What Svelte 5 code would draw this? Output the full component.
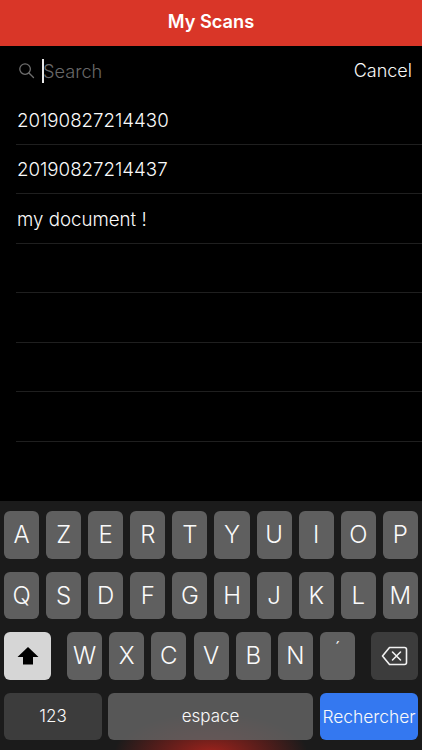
<script>
  const rows = ['20190827214430', '20190827214437', 'my document !', '', '', '', ''];
  const r1 = ['A','Z','E','R','T','Y','U','I','O','P'];
  const r2 = ['Q','S','D','F','G','H','J','K','L','M'];
  const r3 = ['W','X','C','V','B','N','´'];
</script>

<div class="screen">
  <header class="bar">My Scans</header>
  <div class="search">
    <svg class="glass" width="17" height="17" viewBox="0 0 18 18" fill="none" stroke="#6e6e6e" stroke-width="1.4">
      <circle cx="7.5" cy="7.5" r="5.6" />
      <path d="M11.6 11.6 L16.4 16.4" stroke-linecap="round" />
    </svg>
    <span class="caret"></span>
    <span class="placeholder">Search</span>
    <span class="cancel">Cancel</span>
  </div>
  <ul class="list">
    {#each rows as row}
      <li>{row}</li>
    {/each}
  </ul>
  <div class="keyboard">
    <div class="glow"></div>
    <div class="krow">
      {#each r1 as k}<div class="key">{k}</div>{/each}
    </div>
    <div class="krow">
      {#each r2 as k}<div class="key">{k}</div>{/each}
    </div>
    <div class="krow third">
      <div class="key shift">
        <svg width="22" height="20" viewBox="0 0 22 20"><path d="M11 1 L21.5 11 H16 V18.5 H6 V11 H0.5 Z" fill="#000" /></svg>
      </div>
      <div class="letters">
        {#each r3 as k}<div class="key" class:accent={k === '´'}>{k}</div>{/each}
      </div>
      <div class="key del">
        <svg width="27" height="20" viewBox="0 0 27 20" fill="none" stroke="#f2f2f2" stroke-width="1.6">
          <path d="M8.5 1.5 H23.5 Q25.5 1.5 25.5 3.5 V16.5 Q25.5 18.5 23.5 18.5 H8.5 L1.5 10 Z" stroke-linejoin="round" />
          <path d="M11.5 6 L19.5 14 M19.5 6 L11.5 14" stroke-linecap="round" />
        </svg>
      </div>
    </div>
    <div class="krow fourth">
      <div class="key num">123</div>
      <div class="key space">espace</div>
      <div class="key go">Rechercher</div>
    </div>
  </div>
</div>

<style>
  :global(body) {
    margin: 0;
    background: #000;
  }
  .screen {
    width: 422px;
    height: 750px;
    display: flex;
    flex-direction: column;
    background: #000;
    color: #fff;
    font-family: Inter, "Liberation Sans", sans-serif;
    overflow: hidden;
  }
  .bar {
    height: 46px;
    flex: none;
    background: #d93628;
    display: flex;
    align-items: center;
    justify-content: center;
    font-size: 18.2px;
    font-weight: 600;
    padding-bottom: 5px;
    box-sizing: border-box;
  }
  .search {
    height: 49px;
    flex: none;
    display: flex;
    align-items: center;
    padding: 0 10px 0 18px;
    box-sizing: border-box;
  }
  .glass {
    flex: none;
    margin-right: 7px;
  }
  .caret {
    width: 2px;
    height: 24px;
    background: #e8e8e8;
    flex: none;
  }
  .placeholder {
    color: #686868;
    font-size: 18.2px;
    font-weight: 350;
    margin-left: -1px;
  }
  .cancel {
    margin-left: auto;
    font-size: 18px;
    font-weight: 350;
    color: #f8f8f8;
  }
  .list {
    list-style: none;
    margin: 0;
    padding: 0 0 0 16px;
    flex: 1;
  }
  .list li {
    height: 49.5px;
    box-sizing: border-box;
    border-bottom: 1px solid #1f1f1f;
    display: flex;
    align-items: center;
    font-size: 18.7px;
    font-weight: 350;
    color: #fafafa;
    padding-top: 2px;
    padding-left: 1px;
  }
  .keyboard {
    position: relative;
    flex: none;
    height: 249px;
    box-sizing: border-box;
    background: #1b1b1b;
    padding: 10px 4px 0;
    display: flex;
    flex-direction: column;
    gap: 13px;
    overflow: hidden;
  }
  .glow {
    position: absolute;
    left: 116px;
    top: 212px;
    width: 190px;
    height: 80px;
    background: radial-gradient(ellipse at center, rgba(190, 36, 28, 0.8) 0%, rgba(170, 32, 26, 0.35) 45%, rgba(170, 32, 26, 0) 72%);
  }
  .krow {
    position: relative;
    display: flex;
    gap: 7px;
    height: 47.5px;
  }
  .key {
    flex: 1;
    min-width: 0;
    background: #5f5f5f;
    border-radius: 6px;
    display: flex;
    align-items: center;
    justify-content: center;
    font-size: 24px;
    font-weight: 350;
    color: #fafafa;
  }
  .krow.third {
    gap: 0;
  }
  .letters {
    flex: 1;
    display: flex;
    gap: 7.2px;
    margin: 0 16px;
  }
  .shift, .del {
    flex: 0 0 47px;
  }
  .shift {
    background: #d6d6d6;
  }
  .del {
    background: #3c3c3c;
  }
  .accent {
    align-items: flex-start;
    padding-top: 5px;
    box-sizing: border-box;
    font-size: 20px;
  }
  .fourth {
    gap: 6px;
  }
  .num {
    flex: 0 0 98px;
    background: #3c3c3c;
    font-size: 17px;
  }
  .space {
    flex: 1;
    background: rgba(98, 98, 98, 0.85);
    font-size: 17px;
    margin-right: 1px;
  }
  .go {
    flex: 0 0 98px;
    background: #3478f0;
    font-size: 17.4px;
  }
</style>
